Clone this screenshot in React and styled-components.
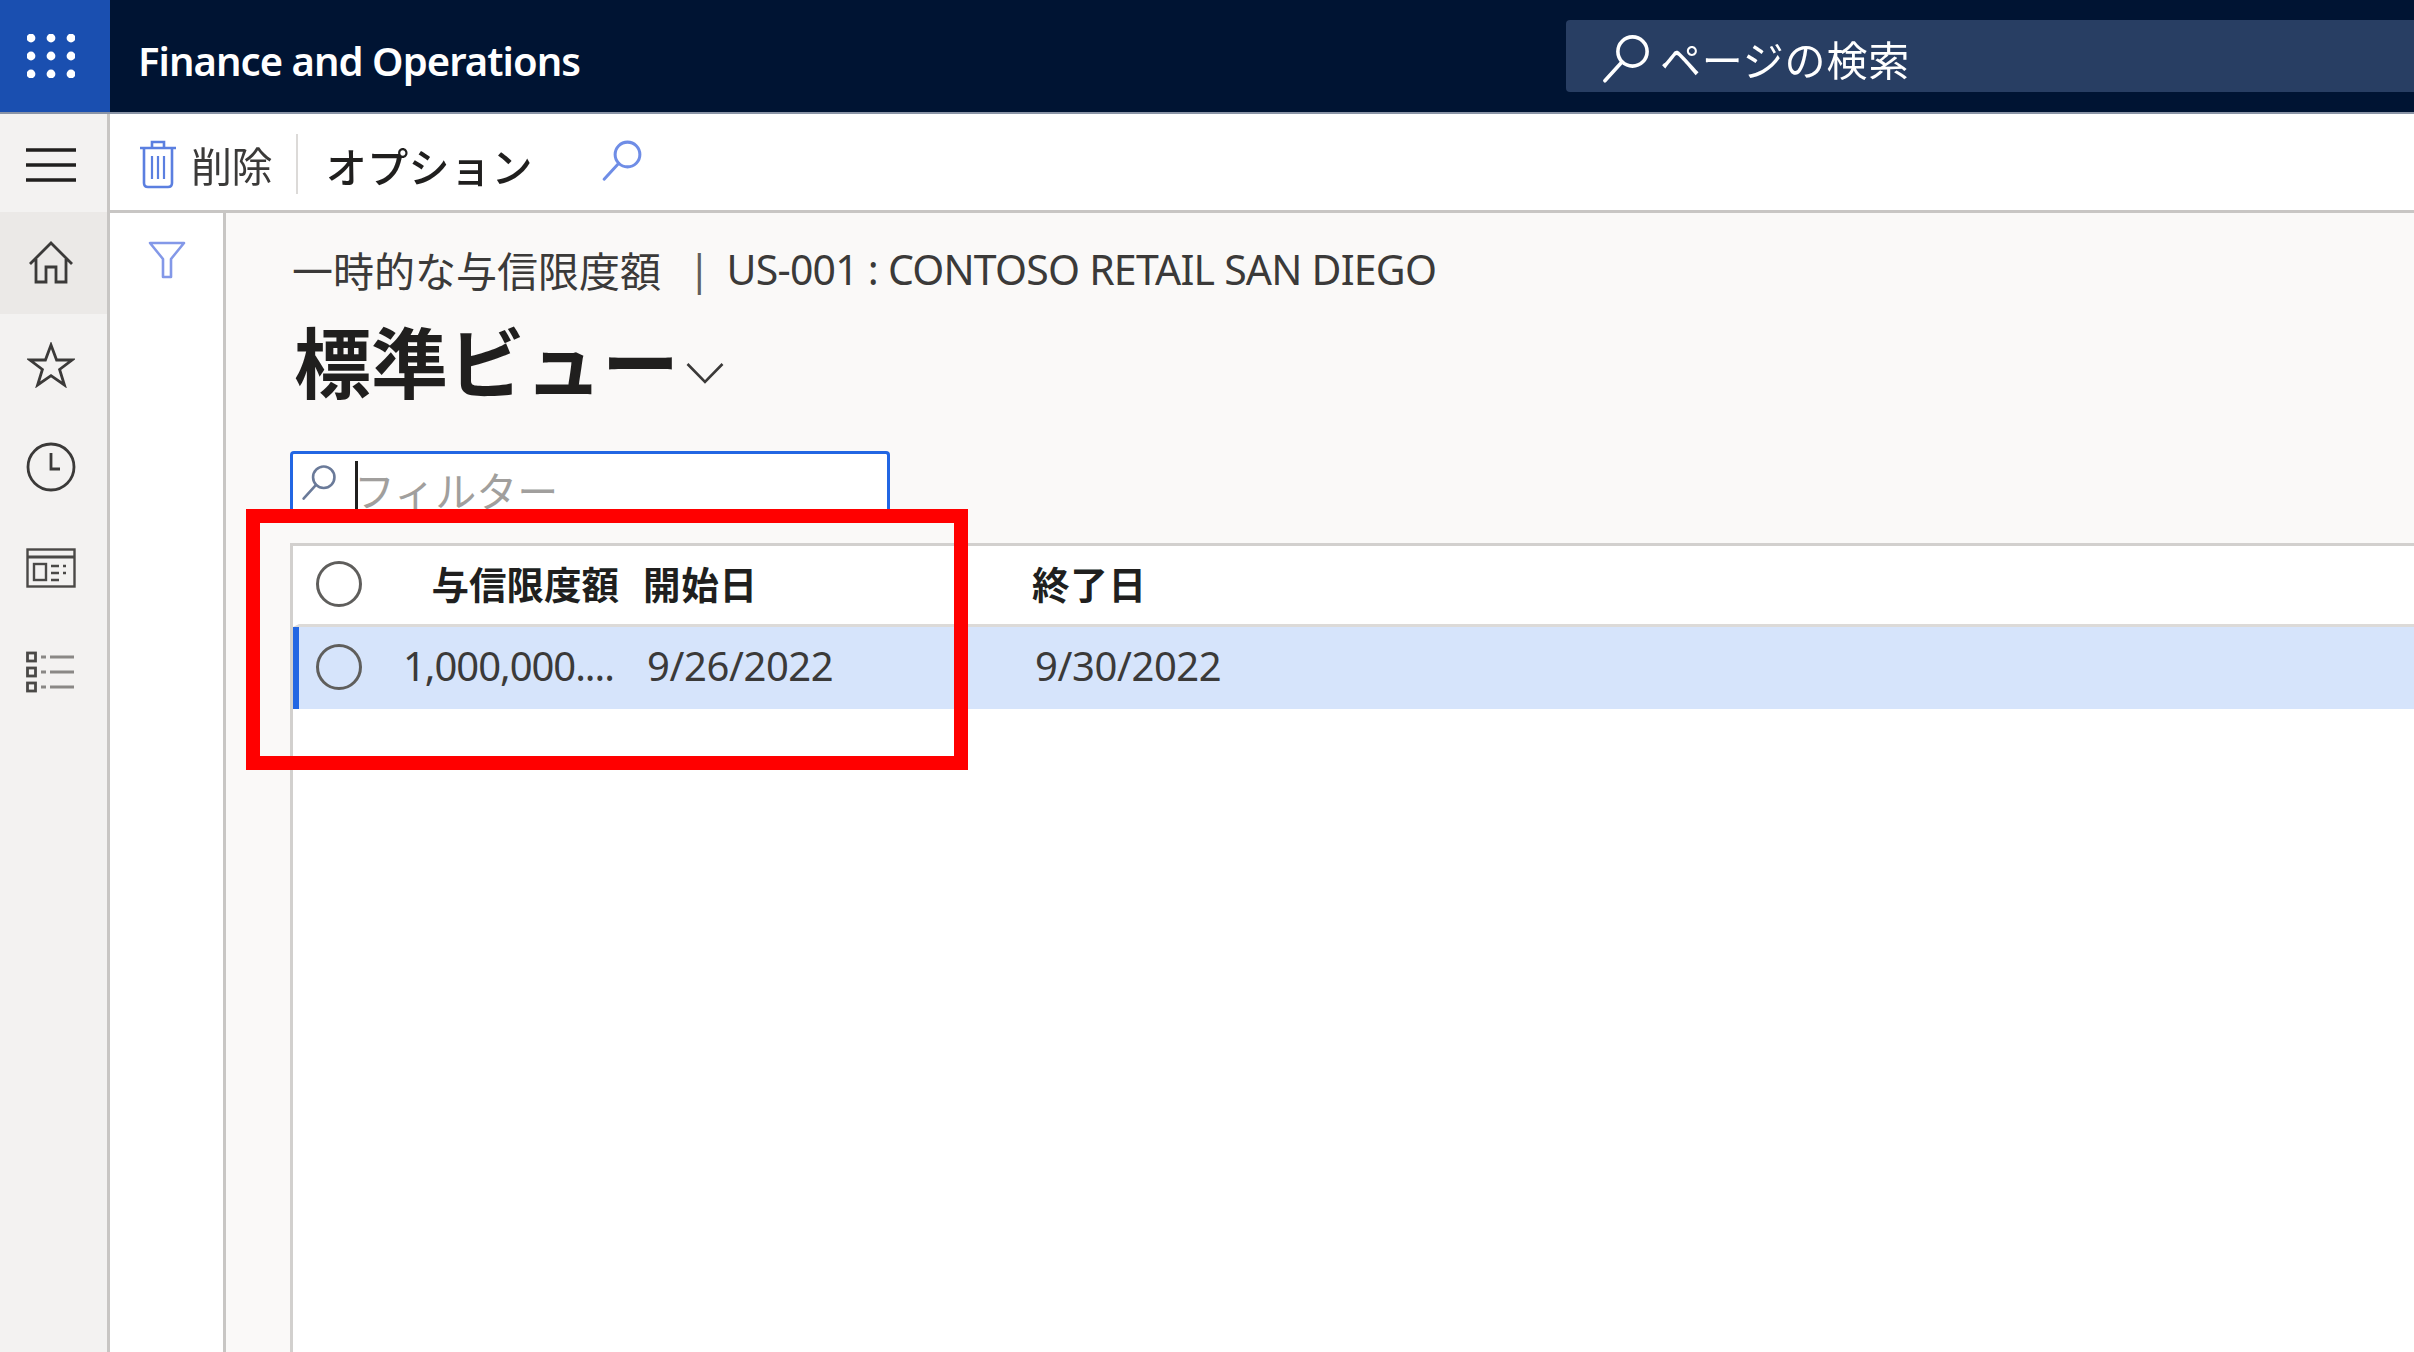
import React from "react";
import styled, { createGlobalStyle } from "styled-components";

const Global = createGlobalStyle`
  html, body { margin: 0; padding: 0; background: #fff; }
  body { font-family: "Noto Sans", "Noto Sans CJK JP", sans-serif; color: #201f1e; }
  * { box-sizing: border-box; }
`;

const Page = styled.div`
  position: relative;
  width: 2414px;
  height: 1352px;
  overflow: hidden;
  display: flex;
  flex-direction: column;
`;
const Blurred = styled.div`
  display: flex;
  flex-direction: column;
  flex: 1;
  min-height: 0;
  filter: blur(0.7px);
`;
const Header = styled.header`
  height: 114px;
  flex: none;
  display: flex;
  align-items: center;
  background: #001433;
  border-bottom: 2px solid #8a94a6;
`;
const Waffle = styled.div`
  width: 110px;
  height: 100%;
  background: #1a4fb0;
  display: flex;
  align-items: center;
  justify-content: center;
  padding-right: 9px;
`;
const AppTitle = styled.div`
  margin-left: 28px;
  width: 1428px;
  padding-top: 8px;
  font-size: 40px;
  font-weight: 600;
  letter-spacing: -0.95px;
  color: #fff;
  white-space: nowrap;
`;
const HeaderSearch = styled.div`
  flex: 1;
  height: 72px;
  background: #283e63;
  border-radius: 4px 0 0 4px;
  display: flex;
  align-items: center;
  padding: 3px 0 0 34px;
  gap: 8px;
  color: #fff;
  font-size: 41px;
  letter-spacing: 0.8px;
`;
const Body = styled.div`
  flex: 1;
  min-height: 0;
  display: flex;
`;
const Rail = styled.nav`
  width: 110px;
  flex: none;
  background: #f3f2f1;
  border-right: 3px solid #c8c6c4;
  display: flex;
  flex-direction: column;
`;
const RailItem = styled.div`
  height: ${(p) => (p.$tall ? 98 : 102)}px;
  display: flex;
  align-items: center;
  justify-content: center;
  padding: ${(p) => p.$down || 0}px 6px ${(p) => p.$up || 0}px 0;
  background: ${(p) => (p.$active ? "#ebe9e7" : "transparent")};
`;
const Main = styled.div`
  flex: 1;
  min-width: 0;
  display: flex;
  flex-direction: column;
`;
const Toolbar = styled.div`
  height: 99px;
  flex: none;
  background: #fff;
  border-bottom: 3px solid #c8c6c4;
  display: flex;
  align-items: center;
  padding: 3px 0 0 29px;
`;
const DeleteButton = styled.div`
  display: flex;
  align-items: center;
  gap: 14px;
  font-size: 41px;
  color: #3b3a39;
  letter-spacing: -0.6px;
`;
const Separator = styled.div`
  width: 2px;
  height: 60px;
  margin: 0 28px 0 24px;
  background: #dcdad8;
`;
const OptionsLabel = styled.div`
  font-size: 41px;
  font-weight: 500;
  letter-spacing: 0.4px;
  color: #201f1e;
  margin-top: 2px;
`;
const ToolbarSearch = styled.div`
  display: flex;
  margin-left: 67px;
  margin-top: -8px;
`;
const Workspace = styled.div`
  flex: 1;
  min-height: 0;
  display: flex;
`;
const FilterPane = styled.aside`
  width: 116px;
  flex: none;
  background: #fff;
  border-right: 3px solid #c8c6c4;
  padding: 28px 0 0 38px;
`;
const Content = styled.main`
  flex: 1;
  min-width: 0;
  background: #faf9f8;
  padding: 23px 0 0 64px;
  display: flex;
  flex-direction: column;
`;
const Crumb = styled.div`
  height: 66px;
  display: flex;
  align-items: center;
  padding-left: 2px;
  font-size: 41px;
  color: #3b3a39;
  white-space: nowrap;
`;
const CrumbBar = styled.span`
  margin: 0 16px 0 27px;
  color: #605e5c;
`;
const CrumbRecord = styled.span`
  letter-spacing: -0.78px;
`;
const TitleRow = styled.div`
  height: 86px;
  margin-top: 19px;
  display: flex;
  align-items: center;
  padding-left: 4px;
`;
const Title = styled.h1`
  margin: 0;
  font-size: 77px;
  font-weight: 700;
  line-height: 86px;
  color: #201f1e;
`;
const TitleChevron = styled.div`
  display: flex;
  margin: 18px 0 0 7px;
`;
const FilterBox = styled.div`
  margin-top: 44px;
  width: 600px;
  height: 72px;
  flex: none;
  background: #fff;
  border: 2px solid #c3d2f0;
  border-top: 3px solid #2266e3;
  border-left: 3px solid #2266e3;
  border-right: 3px solid #2266e3;
  border-radius: 4px;
  display: flex;
  align-items: flex-start;
  padding: 9px 0 0 7px;
`;
const Caret = styled.div`
  width: 3px;
  height: 62px;
  margin: -2px 0 0 17px;
  background: #201f1e;
`;
const Placeholder = styled.div`
  margin-left: -4px;
  font-size: 41px;
  line-height: 56px;
  color: #a19f9d;
`;
const Grid = styled.section`
  margin-top: 20px;
  flex: 1;
  min-height: 0;
  background: #fff;
  border-top: 3px solid #d2d0ce;
  border-left: 3px solid #d2d0ce;
`;
const Row = styled.div`
  display: grid;
  grid-template-columns: 96px 248px 389px 1fr;
  align-items: center;
  height: ${(p) => (p.$head ? 81 : 82)}px;
  border-left: 6px solid ${(p) => (p.$selected ? "#2266e3" : "transparent")};
  background: ${(p) => (p.$selected ? "#d6e4fb" : "#fff")};
  border-bottom: ${(p) => (p.$head ? "3px solid #dcdad8" : "none")};
`;
const CheckCell = styled.div`
  display: flex;
  padding-left: 17px;
`;
const Radio = styled.div`
  width: 46px;
  height: 46px;
  margin-top: -3px;
  border-radius: 50%;
  border: 3px solid #5f5e5c;
`;
const HeadCell = styled.div`
  margin-top: -6px;
  font-size: 37.5px;
  font-weight: 700;
  letter-spacing: ${(p) => (p.$right ? 0 : 0.8)}px;
  color: #201f1e;
  white-space: nowrap;
  text-align: ${(p) => (p.$right ? "right" : "left")};
  padding-right: ${(p) => (p.$right ? 24 : 0)}px;
`;
const ValueCell = styled.div`
  font-family: "Noto Sans", sans-serif;
  font-size: 40px;
  margin-top: -6px;
  letter-spacing: ${(p) => (p.$tight ? -1.05 : -0.4)}px;
  color: #3b3a39;
  white-space: nowrap;
  padding-left: ${(p) => p.$indent || 0}px;
`;
const Highlight = styled.div`
  position: absolute;
  left: 246px;
  top: 509px;
  width: 722px;
  height: 261px;
  border: 14px solid #ff0000;
  pointer-events: none;
`;

const Search = ({ size, color, sw = 2 }) => (
  <svg width={size} height={size} viewBox="0 0 32 32" fill="none" stroke={color} strokeWidth={sw} strokeLinecap="round">
    <circle cx="20" cy="12" r="9" />
    <path d="M13.5 18.5 3 30" />
  </svg>
);

const Dots = () => (
  <svg width="48" height="44" viewBox="0 0 48 44" fill="#fff">
    {[4, 22, 40].flatMap((y) =>
      [4, 24, 44].map((x) => <circle key={`${x}-${y}`} cx={x} cy={y} r="4.4" />)
    )}
  </svg>
);
const Hamburger = () => (
  <svg width="50" height="36" viewBox="0 0 50 36" stroke="#201f1e" strokeWidth="3.4">
    <path d="M0 3h50M0 18h50M0 33h50" />
  </svg>
);
const Home = () => (
  <svg width="46" height="44" viewBox="0 0 46 44" fill="none" stroke="#3b3a39" strokeWidth="2.8">
    <path d="M2 24 23 3l21 21M8 19v23h10V27h10v15h10V19" />
  </svg>
);
const Star = () => (
  <svg width="48" height="46" viewBox="0 0 48 46" fill="none" stroke="#3b3a39" strokeWidth="2.8" strokeLinejoin="miter">
    <path d="M24 3l5.6 15H45L32.6 27.5 37.4 43 24 33.6 10.6 43l4.8-15.5L3 18h15.4z" />
  </svg>
);
const Clock = () => (
  <svg width="50" height="50" viewBox="0 0 50 50" fill="none" stroke="#3b3a39" strokeWidth="2.8">
    <circle cx="25" cy="25" r="23" />
    <path d="M25 11v16h9" />
  </svg>
);
const FormIcon = () => (
  <svg width="50" height="40" viewBox="0 0 50 40" fill="none" stroke="#4a4947" strokeWidth="2.4">
    <rect x="1.5" y="1.5" width="47" height="37" />
    <path d="M1.5 9h47" strokeWidth="3" />
    <rect x="8" y="16" width="12" height="16" />
    <path d="M25 18h8M25 25h8M25 32h8M37 18h3M37 25h3" />
  </svg>
);
const ListIcon = () => (
  <svg width="50" height="42" viewBox="0 0 50 42" fill="none" stroke="#4a4947" strokeWidth="2.8">
    <rect x="1.5" y="2" width="8" height="8" />
    <rect x="1.5" y="17" width="8" height="8" />
    <rect x="1.5" y="32" width="8" height="8" />
    <path d="M15 6h5M24 6h24M15 21h5M24 21h24M15 36h5M24 36h24" stroke="#8a8886" />
  </svg>
);
const Trash = () => (
  <svg width="38" height="50" viewBox="0 0 38 50" fill="none" stroke="#5b7fe0" strokeWidth="2.6">
    <path d="M1 9h36M13 9V3h12v6M5 9v35q0 4 4 4h20q4 0 4-4V9" />
    <path d="M13 17v23M19 17v23M25 17v23" strokeWidth="2.2" />
  </svg>
);
const Funnel = () => (
  <svg width="38" height="38" viewBox="0 0 38 38" fill="none" stroke="#8398e8" strokeWidth="2.6" strokeLinejoin="round">
    <path d="M2 2h34L23 18v18h-8V18z" />
  </svg>
);
const Chevron = () => (
  <svg width="38" height="22" viewBox="0 0 38 22" fill="none" stroke="#3b3a39" strokeWidth="2.6">
    <path d="M1.5 2 19 20 36.5 2" />
  </svg>
);

export default function App() {
  return (
    <Page>
      <Global />
      <Blurred>
        <Header>
          <Waffle><Dots /></Waffle>
          <AppTitle>Finance and Operations</AppTitle>
          <HeaderSearch>
            <Search size={52} color="#fff" sw={2.2} />
            ページの検索
          </HeaderSearch>
        </Header>
        <Body>
          <Rail>
            <RailItem $tall $down={3}><Hamburger /></RailItem>
            <RailItem $active $up={3}><Home /></RailItem>
            <RailItem><Star /></RailItem>
            <RailItem><Clock /></RailItem>
            <RailItem $up={2}><FormIcon /></RailItem>
            <RailItem $down={2}><ListIcon /></RailItem>
          </Rail>
          <Main>
            <Toolbar>
              <DeleteButton><Trash />削除</DeleteButton>
              <Separator />
              <OptionsLabel>オプション</OptionsLabel>
              <ToolbarSearch><Search size={44} color="#6f8de6" sw={2.2} /></ToolbarSearch>
            </Toolbar>
            <Workspace>
              <FilterPane><Funnel /></FilterPane>
              <Content>
                <Crumb>
                  一時的な与信限度額
                  <CrumbBar>|</CrumbBar>
                  <CrumbRecord>US-001 : CONTOSO RETAIL SAN DIEGO</CrumbRecord>
                </Crumb>
                <TitleRow>
                  <Title>標準ビュー</Title>
                  <TitleChevron><Chevron /></TitleChevron>
                </TitleRow>
                <FilterBox>
                  <Search size={38} color="#6a7a99" sw={2.2} />
                  <Caret />
                  <Placeholder>フィルター</Placeholder>
                </FilterBox>
                <Grid>
                  <Row $head>
                    <CheckCell><Radio /></CheckCell>
                    <HeadCell $right>与信限度額</HeadCell>
                    <HeadCell>開始日</HeadCell>
                    <HeadCell>終了日</HeadCell>
                  </Row>
                  <Row $selected>
                    <CheckCell><Radio /></CheckCell>
                    <ValueCell $indent={8} $tight>1,000,000....</ValueCell>
                    <ValueCell $indent={4}>9/26/2022</ValueCell>
                    <ValueCell $indent={3}>9/30/2022</ValueCell>
                  </Row>
                </Grid>
              </Content>
            </Workspace>
          </Main>
        </Body>
      </Blurred>
      <Highlight />
    </Page>
  );
}
